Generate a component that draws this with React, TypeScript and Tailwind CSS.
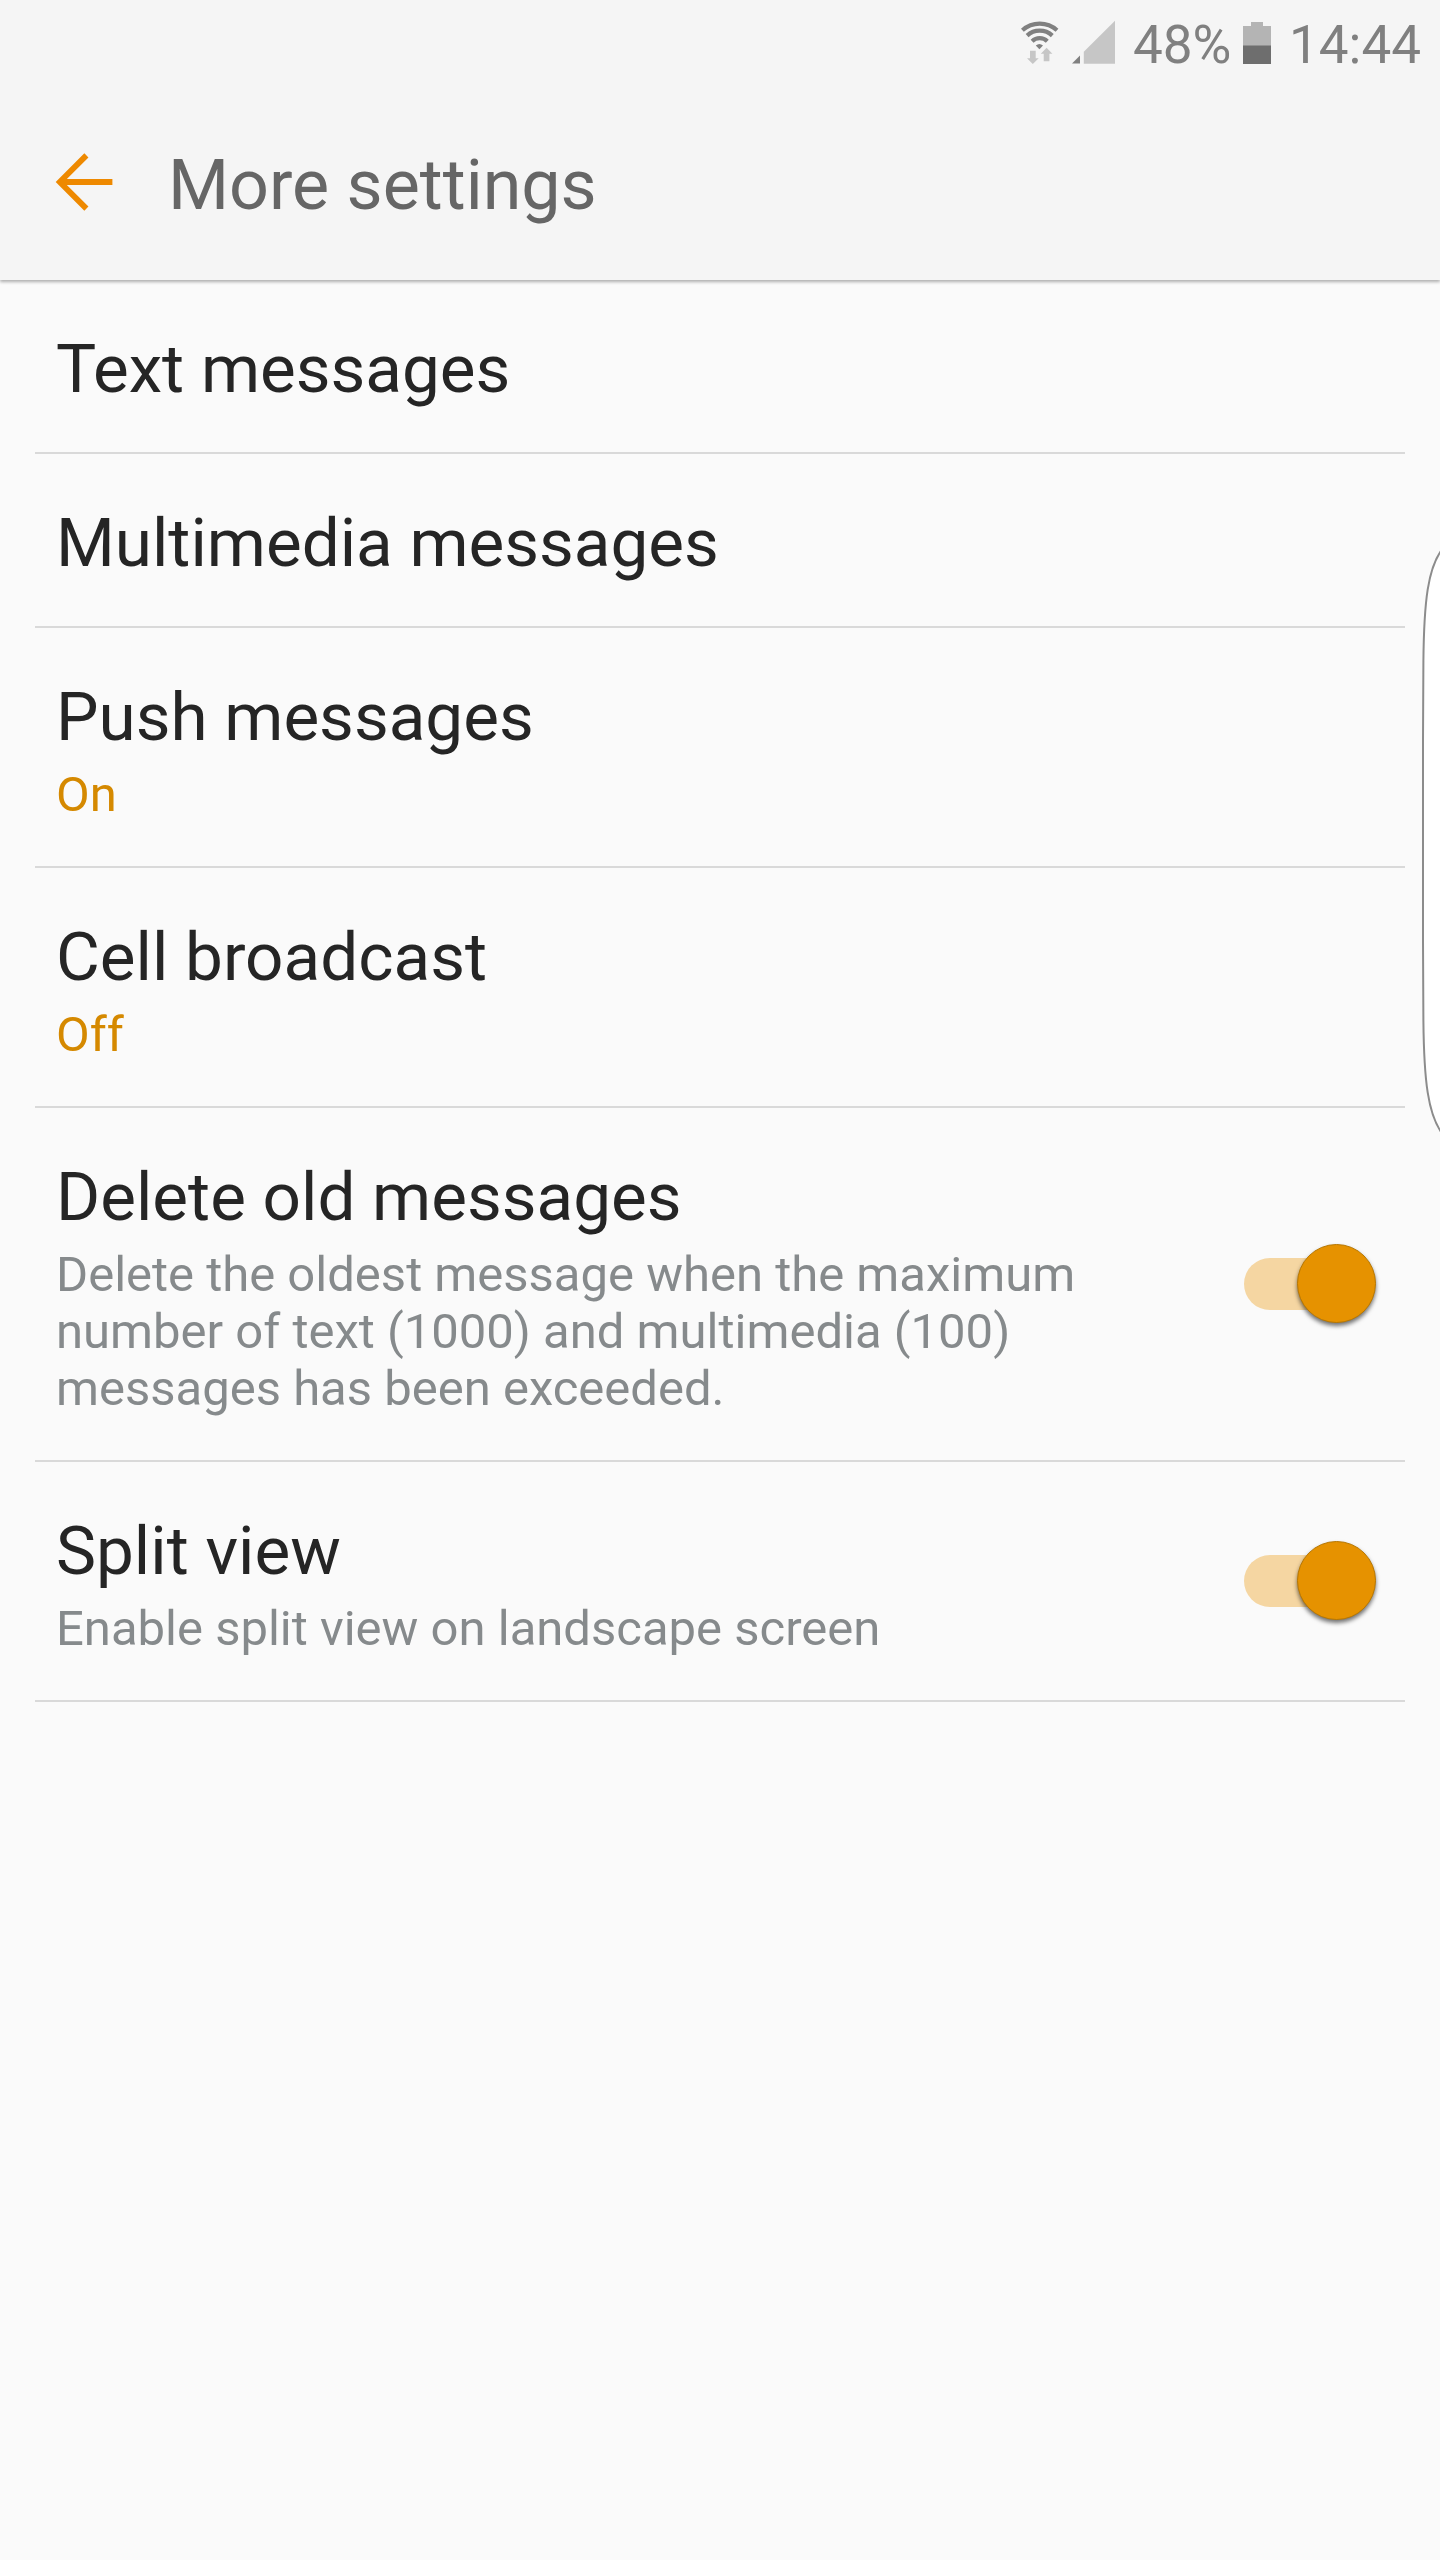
import React from "react";

type Setting = {
  title: string;
  value?: string;
  description?: string;
  enabled?: boolean;
};

const settings: Setting[] = [
  { title: "Text messages" },
  { title: "Multimedia messages" },
  { title: "Push messages", value: "On" },
  { title: "Cell broadcast", value: "Off" },
  {
    title: "Delete old messages",
    description:
      "Delete the oldest message when the maximum number of text (1000) and multimedia (100) messages has been exceeded.",
    enabled: true,
  },
  {
    title: "Split view",
    description: "Enable split view on landscape screen",
    enabled: true,
  },
];

const StatusBar = () => {
  return (
    <div className="flex h-[90px] items-start pl-[1020px] text-[53px] leading-[90px] text-[#808080]">
      <svg className="h-[90px] w-10 shrink-0" viewBox="0 0 40 90" fill="none">
        <g stroke="#808080" strokeWidth="4.2">
          <path d="M2.4 30.3a25.9 25.9 0 0 1 34.6 0" />
          <path d="M7.1 35.6a18.6 18.6 0 0 1 25.2 0" />
          <path d="M12.1 41.2a11 11 0 0 1 15.2 0" />
        </g>
        <path d="M15.8 45.6a5.4 5.4 0 0 1 7.2 0l-3.6 3.6z" fill="#808080" />
        <path d="M10 50.7h5.7v7.6h3L12.8 64 7 58.3h3z" fill="#c6c6c6" />
        <path d="M23.7 61.3h5.7v-7.6h3l-5.8-6-5.8 6h2.9z" fill="#c6c6c6" />
      </svg>
      <svg className="ml-3 h-[90px] w-[43px] shrink-0" viewBox="0 0 43 90">
        <path d="M0 63.6l8-8.2v8.2z" fill="#808080" />
        <path d="M11.8 51.7L43 20.7v43H11.8z" fill="#c6c6c6" />
      </svg>
      <span className="ml-[18px] w-[98px] whitespace-nowrap">48%</span>
      <svg className="ml-3 h-[90px] w-7 shrink-0" viewBox="0 0 28 90">
        <path d="M8 22h12v4h8v19.3H0V26h8z" fill="#b4b4b4" />
        <path d="M0 45.3h28V64H0z" fill="#6e6e6e" />
      </svg>
      <span className="ml-[18px] whitespace-nowrap">14:44</span>
    </div>
  );
};

const Switch = () => {
  return (
    <div className="mr-7 flex h-20 w-[133px] shrink-0 items-center">
      <div className="h-[52px] w-[106px] rounded-full bg-[#f5d6a2]" />
      <div className="-mt-px -ml-[53px] size-[79px] shrink-0 rounded-full border border-[#b87700] bg-[#e69200] shadow-[0_3px_4px_rgba(0,0,0,0.55)]" />
    </div>
  );
};

const SettingRow = ({ title, value, description, enabled }: Setting) => {
  return (
    <li className="flex items-center justify-between border-b-2 border-[#d9d9d9] pl-[21px]">
      <div className="pt-[49px] pb-[43px]">
        <h2 className="text-[67.4px] leading-[80px] text-[#252525]">{title}</h2>
        {value && (
          <p className="mt-[9px] text-[49px] leading-[57px] text-[#d58900]">
            {value}
          </p>
        )}
        {description && (
          <p className="mt-[9px] w-[1080px] text-[49px] leading-[57px] text-[#868a8c]">
            {description}
          </p>
        )}
      </div>
      {enabled && <Switch />}
    </li>
  );
};

const App = () => {
  return (
    <div className="relative h-[2560px] w-[1440px] overflow-hidden bg-[#fafafa] font-[Roboto,sans-serif]">
      <header className="h-[280px] bg-[#f5f5f5] shadow-[0_2px_3px_rgba(0,0,0,0.3)]">
        <StatusBar />
        <div className="flex h-[190px] items-start pt-[51px] pl-[55px]">
          <svg
            className="mt-2.5 h-[62px] w-[58px]"
            viewBox="0 0 58 62"
            fill="none"
            stroke="#ee8900"
            strokeWidth="5.8"
          >
            <path d="M31.4 4.4L4.8 31l26.6 26.6M4.8 31h52.6" />
          </svg>
          <h1 className="mt-0.5 ml-[55px] text-[70px] leading-[84px] text-[#666666]">
            More settings
          </h1>
        </div>
      </header>

      <ul className="mr-[35px] ml-[35px]">
        {settings.map((setting) => (
          <SettingRow key={setting.title} {...setting} />
        ))}
      </ul>

      {/* edge panel handle peeking in over the list */}
      <svg
        className="absolute top-[541px] right-0 h-[600px] w-5"
        viewBox="0 0 20 600"
        fill="#fff"
        stroke="#8c8c8c"
        strokeWidth="2"
      >
        <path d="M22 8.5C8 27 4 60 3.4 120L3 200v200l.4 80C4 540 8 573 22 592.5" />
      </svg>
    </div>
  );
};

export default App;
